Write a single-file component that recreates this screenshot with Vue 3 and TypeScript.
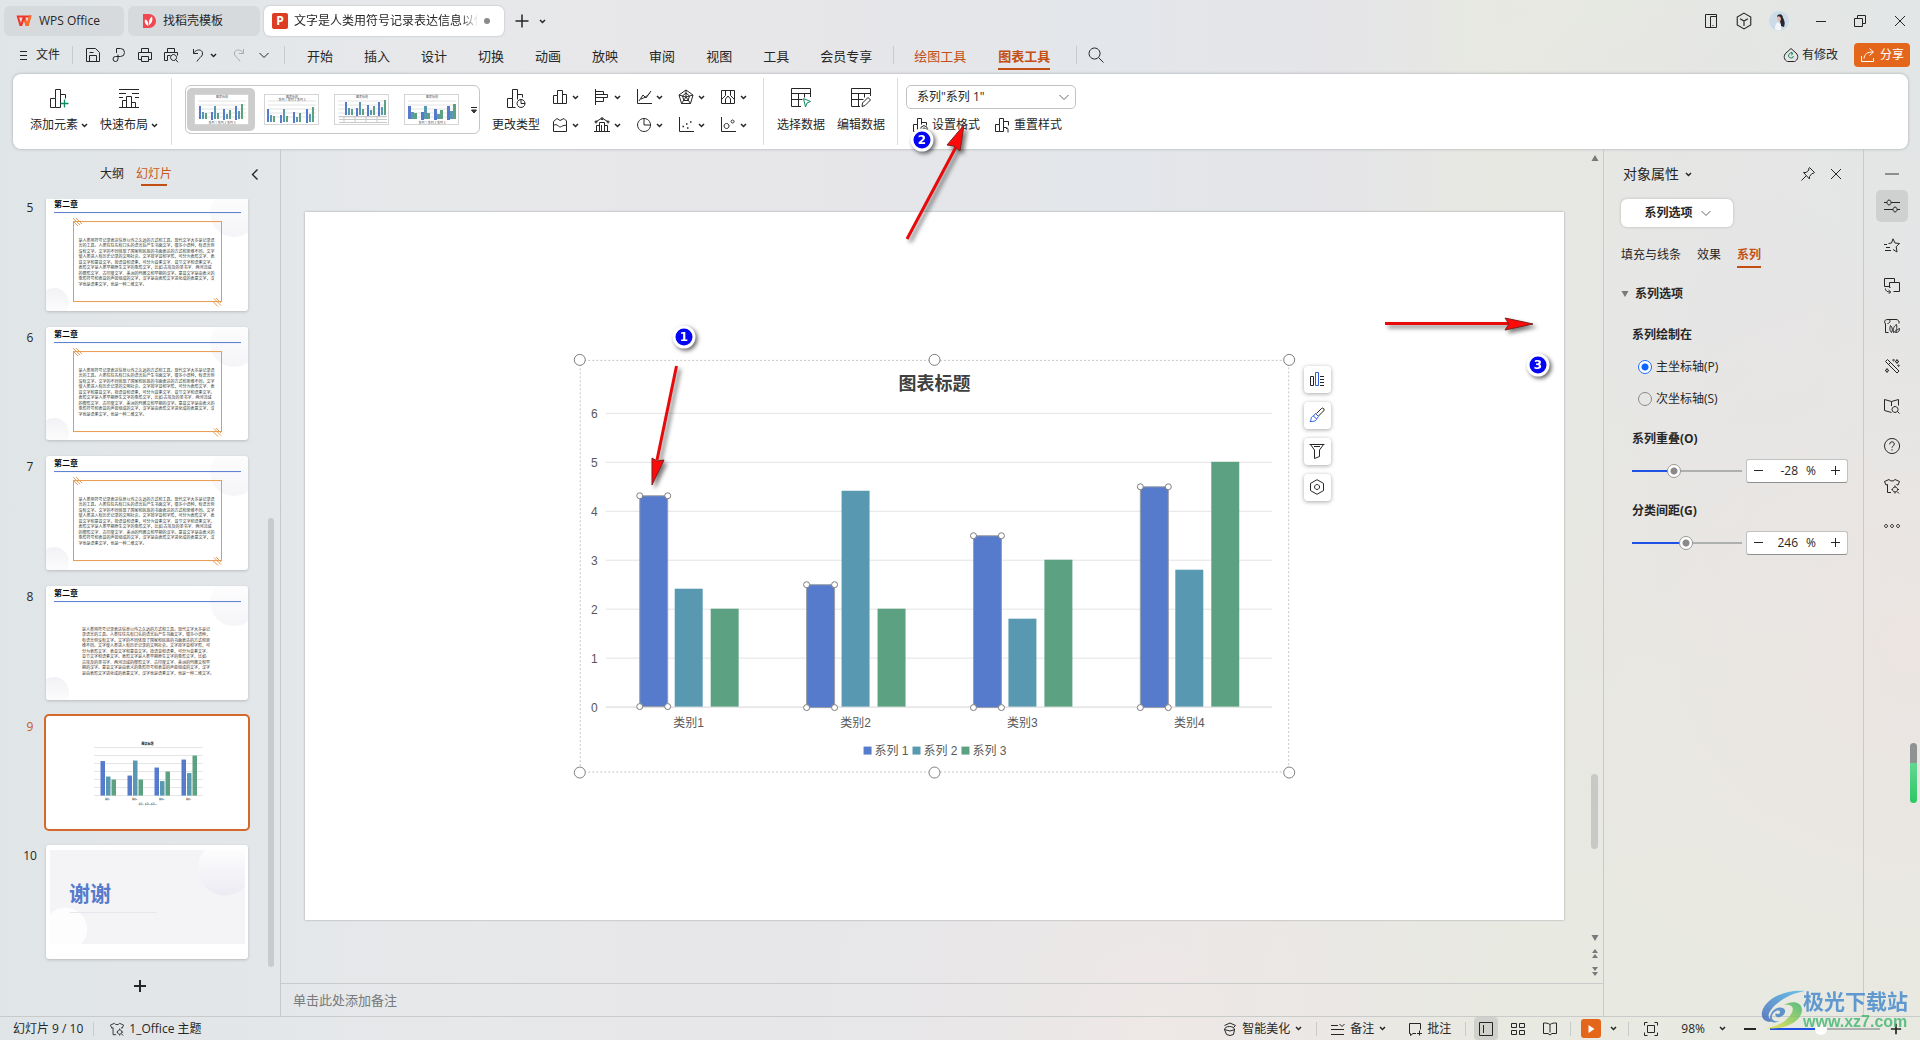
<script setup lang="ts">
import { computed, h, ref } from 'vue'

type Shape = { d: string; stroke?: string; fill?: string; w?: number }
type Glyph = { box: number; shapes: Shape[] }

const g = (box: number, ...items: (string | Shape)[]): Glyph => ({
  box,
  shapes: items.map((i) => (typeof i === 'string' ? { d: i } : i)),
})

const GREEN = '#0f8a63'
const BLUE = '#2b5be0'

const glyphs: Record<string, Glyph> = {
  wps: g(16,
    { d: 'M0.5 2.5h15L12.4 13H9.8L8 7.6 6.2 13H3.6z', fill: '#f0352b', stroke: 'none' },
    { d: 'M3 4.4l2 5.6 1.6-5.6zM13 4.4l-2 5.6-1.6-5.6z', fill: '#dadde0', stroke: 'none' },
    { d: 'M8 7.6L9.8 13h2.6l3.1-10.5h-2.4l-2 7-1.2-3.4z', fill: '#ff6a26', stroke: 'none' }),
  docer: g(16,
    { d: 'M2 1h6a7 7 0 0 1 0 14H2z', fill: '#f0484e', stroke: 'none' },
    { d: 'M7.5 13C3.5 11.5 3.5 8 4 6.500c2 .5 3.500 2 3.500 6.500zM8 12c-.5-4 .5-7 3-8.500 1 3.500 0 7-3 8.500z', fill: '#fff', stroke: 'none' }),
  plus: g(14, { d: 'M7 1v12M1 7h12', w: 2 }),
  plusThin: g(14, { d: 'M7 0.5v13M0.500 7h13', w: 1.5 }),
  plusSmall: g(10, 'M4.500 0v9M0 4.500h9'),
  minusSmall: g(10, 'M0 4.500h9'),
  minus: g(12, { d: 'M0 6h12', w: 2 }),
  chev: g(7, { d: 'M1 2l2.500 2.500L6 2', w: 1.5 }),
  chevWide: g(12, 'M1.500 4L6 8.500 10.500 4'),
  chevLeft: g(12, { d: 'M8.500 1.500L3.500 6.500l5 5', w: 1.4 }),
  menu: g(10, 'M1 1.500h7M1 5.500h7M1 9.500h7'),
  save: g(16, 'M1.500 1.500h9l4 4v9h-13zM4.500 14.500v-6h7v6M4.500 5.500h4'),
  exporter: g(16, 'M5.500 6V1.500h4a4 4 0 0 1 0 8h-5a2.500 2.500 0 1 0 2.500 2.500V7.500'),
  print: g(16, 'M4.500 5.500v-4h7v4M4.500 12.500h-3v-7h13v7h-3M4.500 9.500h7v5h-7z'),
  preview: g(16, 'M4.500 5.500v-4h7v4M4.500 13.500h-3v-8h13v3M4.500 13.500v-5h3', 'M10.500 7.500a3 3 0 1 0 .1 0zM12.800 12.800l2.200 2.500'),
  undo: g(16, 'M3.500 2v4.500h4.500', 'M3.500 6.500C6 1.500 13 2 12.500 7c-.3 3-4 4-5.500 7.500'),
  redo: g(16, 'M12.500 2v4.500H8', 'M12.500 6.500C10 1.500 3 2 3.500 7c.3 3 4 4 5.500 7.500'),
  search: g(16, 'M6.500 1a5.500 5.500 0 1 0 .1 0zM10.500 10.500l5 5'),
  sidebar: g(16, 'M2.500 1.500h11v13h-11zM7.500 14.500v-11h6M9.500 12.500h1'),
  cube: g(16, 'M8 1l6 3.500v7L8 15l-6-3.500v-7zM4.500 6L8 8l3.500-2M8 8v4.500'),
  restore: g(14, 'M1.500 4.500h8v8h-8zM4.500 4.500v-3h8v8h-3'),
  minimize: g(12, 'M1 6.500h10'),
  close: g(14, 'M2 2l10 10M12 2L2 12'),
  cloud: g(16, 'M8 1.500L13 6a5 5 0 0 1-1.500 8.500h-7A5 5 0 0 1 3 6z', { d: 'M9.500 6.500A2.500 2.500 0 1 0 10.500 9M8 5l2 1.500L8.200 8.200', stroke: GREEN }),
  share: g(16, 'M1.500 9v5.500h12V11M4 11.500C4.500 7 7 5 13 5M9.500 1.500L13.500 5l-4 3.500'),
  addEl: g(20, 'M1.500 19.500v-9h5v9zM6.500 10.500v-9h5v18H6.500M11.500 6.500h5v4', { d: 'M15.500 11.500v8M11.500 15.500h8', stroke: GREEN, w: 1.3 }),
  layout: g(20, 'M0 1.500h20M0 5.500h7M13 5.500h7M0 19.500h20M3.500 19.500v-7h4M7.500 19.500v-11h5v11M12.500 14.500h4v5M0 9.500h4M16 9.500h4'),
  changeType: g(20, 'M1.500 19.500v-9h5v9zM6.500 10.500v-9h5v10M6.500 19.500h3M11.500 6.500h5v3', 'M15 11.500a4 4 0 1 0 .1 0zM15 11.500v4h4'),
  column: g(16, 'M1.500 14.500v-8h4v8zM5.500 6.500v-5h5v13M10.500 5.500h4v9h-9'),
  bar: g(16, 'M1.500 0v16M1.500 2.500h8v3h-8M1.500 8.500h12v-3h-12M1.500 8.500h8v4h-8'),
  line: g(16, 'M1.500 0v14.500H16M3 12l4-6 3 3 5-7M5 10c3-1 5-2 9-6'),
  radar: g(16, 'M8 1l7 5-2.500 8.500h-9L1 6zM8 1v7M15 6l-7 2M12.500 14.500L8 8M3.500 14.500L8 8M1 6l7 2M8 4l3.500 3-1.500 4.500H6L4.500 7z'),
  map: g(16, 'M1.500 1.500h13v13h-13zM5.500 1.500v5l-4 4M10.500 1.500v5l4 4M5.500 14v-4l2.500-3 2.500 3v4'),
  area: g(16, 'M1.500 14.500v-10L5 1.500l3 2 4-2 2.500 2.500v10.500zM1.500 8.500c4-3 5 3 8 1 2-1 3-1.500 5-1'),
  combo: g(16, 'M0 14.500h16M2.500 14.500v-6h3v6M5.500 14.500v-9h5v9M10.500 8.500h3v6M7.500 8v6M1.500 5l5-3 3 0 5 3', 'M2 4a1 1 0 1 0 .1 0zM8 .7a1 1 0 1 0 .1 0zM14 4a1 1 0 1 0 .1 0z'),
  pie: g(16, 'M8 1.500a6.500 6.500 0 1 0 .1 0zM8 1.500V8h6.500'),
  scatter: g(16, 'M1.500 0v14.500H16', { d: 'M4.500 9.500h1.500M8 7h1.500M9 11h1.500M12 5h1.500', w: 1.6 }),
  bubble: g(16, 'M1.500 0v14.500H16M6.500 6.500a2.500 2.500 0 1 0 .1 0zM12.500 3a1.500 1.500 0 1 0 .1 0z'),
  pickData: g(20, 'M10 18.500H.5V.5h19V9M.5 5.500h19M.5 11.500h11M7.500 5.500v13M13.500 5.500v4', { d: 'M12.500 10.500l7 3-3.500 1.500-1.500 4z', stroke: GREEN }),
  editData: g(20, 'M9 18.500H.5V.5h19V8M.5 5.500h19M.5 11.500h12M7.500 5.500v13M13.500 5.500v4', 'M11.500 15l5.500-5.500 2.500 2.500-5.500 5.500-3 1z'),
  fmt: g(16, 'M1.500 14.500v-7h4v7zM5.500 7.500v-6h4v6M9.500 5.500h5v3', 'M12 8.500l3 1.800v3.400L12 15.500l-3-1.800v-3.400zM12 11a1 1 0 1 0 .1 0z'),
  reset: g(16, 'M1.500 14.500v-7h4v7zM5.500 7.500v-6h4v13h-4M9.500 4.500h5v4', 'M9 12l2-2 2 2M11 10.500h1.500a2 2 0 0 1 1.500 2v3'),
  pin: g(16, 'M9.500 1.500l5 5-1.500 1-1 0-2.500 3v2.500L3.500 6.500H6L9 4l-.5-1zM6 10l-4.500 4.500'),
  tune: g(16, 'M0 4.500h3M7 4.500h9M0 11.500h9M13 11.500h3', 'M5 2a2 2.500 0 1 0 .1 0zM11 9a2 2.500 0 1 0 .1 0z'),
  star: g(16, 'M4.500 5.500L7.500 5 9 .8l2 4.200 4.500.5-3.300 3.200.8 5.300-4-2.500M0 6.500h3M2 9.500h4M1 12.500h6'),
  shapes: g(16, 'M5.500 8.500h-5v-8h10v4M5.500 4.500h10v9h-6M5.500 4.500v5h1M1.500 10.500c0 2 1 3.500 5 3.500M4.500 12l2.200 2-2.200 2'),
  assist: g(16, 'M4.500 14.500h-3V6C-.5 3 1 1.500 4 1.500h8c2.500 0 3.500 2 3 4M4.500 1.500c3 1 1 4-1 4', 'M7.500 14.500C5 12 6 9 6.500 7.500c2 2 2.500 5 1 7zM9.500 14.500c-1-4 1-7 3-8 1 4-.5 7-3 8zM11.500 14.500c1-2.500 2.500-3.500 4-4 0 2.500-1 4-4 4z'),
  wand: g(16, 'M1.500 3.500l2-2 11.500 11.500-2 2zM4.500 6.500l2-2', 'M13 1.500l.6 1.400 1.400.6-1.400.6L13 5.500l-.6-1.400L11 3.500l1.400-.6zM3 10.500l.6 1.400 1.400.6-1.400.6-.6 1.400-.6-1.400L1 12.500l1.400-.6zM9.500 1.500a.7.7 0 1 0 .1 0zM14.500 7a.7.7 0 1 0 .1 0z'),
  bookSearch: g(16, 'M7.500 14.500L.5 12.500v-11l7 2 7-2v6M7.500 3.500V8', 'M11 8.500a3 3 0 1 0 .1 0zM13.200 13.200l2.300 2.300'),
  help: g(16, 'M8 .5a7.500 7.500 0 1 0 .1 0zM5.700 6.300C5.700 3 10.300 3 10.300 6c0 2-2.300 2-2.300 3.700M8 11.200v1.300'),
  shirt: g(16, 'M5 1.500c1 2 5 2 6 0l4.500 2-1.500 3.500-1.500-.5M7 14.500H3.500v-8L2 7 .5 3.500l4.500-2', 'M11 9a2.500 2.500 0 1 0 .1 0zM11 7.500v1.500M11 14v1.500M7.500 11.500h1M13.500 11.500h1.500M13 13.500l2 2'),
  more: g(16, 'M2 6.500a1.500 1.500 0 1 0 .1 0zM8 6.500a1.500 1.500 0 1 0 .1 0zM14 6.500a1.500 1.500 0 1 0 .1 0z'),
  railMin: g(14, { d: 'M0 7h14', w: 2, stroke: '#8d9092' }),
  cBars: g(16, 'M1.500 5.500h3v9h-3zM11 5.500h4M11 8.500h4M11 11.500h4M11 14.500h4', { d: 'M6.500 1.500h3v13h-3z', stroke: BLUE }),
  cBrush: g(16, 'M7.500 6.500l5-5a1.500 1.500 0 0 1 2 2.500l-5 5', { d: 'M1 14.500c2-2 0-4.500 3.500-5.500l2-2.500 3 3-1.500 2c-1 3-4 3-7 3zM4.500 9l3 3', stroke: BLUE }),
  cFilter: g(16, 'M.5 1.500h15M1.500 1.500l4 5.500v8.500l5-2V7l4-5.500M5 3.500h6'),
  cHex: g(16, 'M8 .7l6.500 3.700v7.200L8 15.300l-6.500-3.700V4.400zM8 5.500a2.500 2.500 0 1 0 .1 0z'),
  beauty: g(14, 'M1.500 7.500a5 3 0 0 1 10 0l-1 5-3.500 1-3.500-1zM1.500 3.500l5.500-2.500 5.500 2.500-2 2M1.500 7.500L7 9l5-1.500'),
  note: g(14, 'M0 3.500h7M0 7.500h13M0 12.500h13M8.500 2l2.500 2.500L13.500 2'),
  comment: g(14, 'M8 11.500H5l-2.500 2v-2h-1v-10h11v6M11.500 8.500v5M9 11.500h5'),
  viewNormal: g(16, 'M1.500 1.500h13v13h-13zM5.500 4v8'),
  viewGrid: g(16, 'M1.500 2.500h5v4h-5zM9.500 2.500h5v4h-5zM1.500 9.500h5v4h-5zM9.500 9.500h5v4h-5z'),
  viewRead: g(16, 'M8 3.500c-2-1.500-4-1.500-6.500-1.500v10.500H6l2 1.500 2-1.500h4.500V2C12 2 10 2 8 3.500zM8 3.500v8'),
  play: g(10, { d: 'M2.500 1l6 4-6 4z', fill: '#fff', stroke: 'none' }),
  fit: g(16, 'M1.500 4.500v-3h3M11.500 1.500h3v3M14.500 11.500v3h-3M4.500 14.500h-3v-3M4.500 4.500h7v7h-7z'),
  triUp: g(8, { d: 'M4 1l3.500 6h-7z', fill: '#77797a', stroke: 'none' }),
  triDown: g(8, { d: 'M4 7L.5 1h7z', fill: '#77797a', stroke: 'none' }),
  dblUp: g(10, { d: 'M5 0l3 4H2zM5 5l3 4H2z', fill: '#77797a', stroke: 'none' }),
  dblDown: g(10, { d: 'M5 5L2 1h6zM5 10L2 6h6z', fill: '#77797a', stroke: 'none' }),
  galleryMore: g(8, 'M1 1.500h6', { d: 'M1.500 4h5L4 7z', fill: '#333', stroke: '#333' }),
}

const Icon = (props: { name: string; size?: number | string }) => {
  const glyph = glyphs[props.name]
  const size = props.size ?? glyph.box
  return h(
    'svg',
    { width: size, height: size, viewBox: `0 0 ${glyph.box} ${glyph.box}`, class: 'icon', 'aria-hidden': 'true' },
    glyph.shapes.map((s) =>
      h('path', { d: s.d, fill: s.fill ?? 'none', stroke: s.stroke ?? 'currentColor', 'stroke-width': s.w ?? 1 }),
    ),
  )
}
Icon.props = ['name', 'size']

const menus = ['开始', '插入', '设计', '切换', '动画', '放映', '审阅', '视图', '工具', '会员专享']
const quickCharts = [
  ['column', 'bar', 'line', 'radar', 'map'],
  ['area', 'combo', 'pie', 'scatter', 'bubble'],
]
const rail = ['tune', 'star', 'shapes', 'assist', 'wand', 'bookSearch', 'help', 'shirt', 'more']

const series = [
  { name: '系列 1', color: '#567bcc', values: [4.3, 2.5, 3.5, 4.5] },
  { name: '系列 2', color: '#5898b0', values: [2.4, 4.4, 1.8, 2.8] },
  { name: '系列 3', color: '#5ca181', values: [2, 2, 3, 5] },
]

const categories = ['类别1', '类别2', '类别3', '类别4']

function bars(x0: number, groupW: number, first: number, step: number, barW: number, base: number, unit: number) {
  return categories.flatMap((_, c) =>
    series.map((s, i) => ({
      key: `${c}-${i}`,
      series: i,
      color: s.color,
      x: Math.floor(x0 + c * groupW + first + i * step),
      y: Math.round(base - s.values[c] * unit),
      w: barW,
      h: Math.round(s.values[c] * unit),
    })),
  )
}

const mainBars = bars(301, 167, 34, 35.6, 28, 495, 49)
const pageBars = bars(100, 54, 12, 11, 9, 159, 16)
const galleryBars = [
  bars(4, 12, 1, 3, 2, 25, 3),
  bars(3, 13, 0, 3, 2, 28, 3),
  bars(10, 11, 1, 3, 2, 21, 3),
  bars(3, 13, 1, 3, 3, 25, 3),
]

const bodyText = [
  '是人类用符号记录表达信息以传之久远的方式和工具。现代文字大多是记录语',
  '言的工具。人类往往先有口头的语言后产生书面文字，很多小语种，有语言但',
  '没有文字。文字的不同体现了国家和民族的书面表达的方式和思维不同。文字',
  '使人类进入有历史记录的文明社会。文字按字音和字形，可分为表形文字、表',
  '音文字和意音文字。按语音和语素，可分为音素文字、音节文字和语素文字。',
  '表形文字是人类早期原生文字的象形文字，比如:古埃及的圣书字、两河流域',
  '的楔形文字、古印度文字、美洲的玛雅文和早期的汉字。意音文字是由表义的',
  '象形符号和表音的声旁组成的文字，汉字是由表形文字进化成的表意文字，汉',
  '字也是语素文字，也是一种二维文字。',
]
const plainText = [
  '是人类用符号记录表达信息以传之久远的方式和工具。现代文字大多是记',
  '录语言的工具。人类往往先有口头的语言后产生书面文字，很多小语种，',
  '有语言但没有文字。文字的不同体现了国家和民族的书面表达的方式和思',
  '维不同。文字使人类进入有历史记录的文明社会。文字按字音和字形，可',
  '分为表形文字、表音文字和意音文字。按语音和语素，可分为音素文字、',
  '音节文字和语素文字。表形文字是人类早期原生文字的象形文字，比如:',
  '古埃及的圣书字、两河流域的楔形文字、古印度文字、美洲的玛雅文和早',
  '期的汉字。意音文字是由表义的象形符号和表音的声旁组成的文字，汉字',
  '是由表形文字进化成的表意文字，汉字也是语素文字，也是一种二维文字。',
]

const pages = [
  { no: 5, kind: 'framed' },
  { no: 6, kind: 'framed' },
  { no: 7, kind: 'framed' },
  { no: 8, kind: 'plain' },
  { no: 9, kind: 'chart' },
  { no: 10, kind: 'thanks' },
]
const current = ref(9)

const axis = ref('primary')
const overlap = ref(-28)
const gapWidth = ref(246)
const zoom = ref(46)
const overlapFill = computed(() => ({ '--fill': `${(overlap.value + 100) / 2}%` }))
const gapFill = computed(() => ({ '--fill': `${gapWidth.value / 5}%` }))
const zoomFill = computed(() => ({ '--fill': `${zoom.value}%` }))
</script>

<template>
  <div class="app">
    <header class="titlebar">
      <button class="doc-tab home"><Icon name="wps" />WPS Office</button>
      <button class="doc-tab store"><Icon name="docer" />找稻壳模板</button>
      <button class="doc-tab active">
        <span class="p-logo">P</span><span class="doc-name">文字是人类用符号记录表达信息以传</span><span class="dirty"></span>
      </button>
      <button class="new-tab" aria-label="新建"><Icon name="plusThin" /></button>
      <button class="new-more" aria-label="更多"><Icon name="chev" /></button>
      <div class="window-tools">
        <button aria-label="侧栏"><Icon name="sidebar" /></button>
        <button aria-label="应用"><Icon name="cube" size="18" /></button>
        <button aria-label="账户">
          <svg width="20" height="20" viewBox="0 0 20 20">
            <circle cx="10" cy="10" r="10" fill="#ccdbe8" />
            <path d="M8 5c2-3 6-2 6 2 2 3 2 6 1 9l-3-1c0-3-1-4-2-6z" fill="#2a2430" />
            <path d="M8 6c2-2 4 0 4 2l-1 3-2-1z" fill="#e7b9a6" />
            <path d="M6 18c0-4 1-6 3-7l3 3 0 5c-2 1-5 0-6-1z" fill="#f2f6fa" />
          </svg>
        </button>
        <button class="win" aria-label="最小化"><Icon name="minimize" /></button>
        <button class="win" aria-label="还原"><Icon name="restore" /></button>
        <button class="win" aria-label="关闭"><Icon name="close" /></button>
      </div>
    </header>

    <nav class="menubar">
      <button class="file"><Icon name="menu" />文件</button>
      <i class="sep"></i>
      <div class="quick">
        <button aria-label="保存"><Icon name="save" /></button>
        <button aria-label="输出"><Icon name="exporter" /></button>
        <button aria-label="打印"><Icon name="print" /></button>
        <button aria-label="打印预览"><Icon name="preview" /></button>
        <button aria-label="撤销" class="undo"><Icon name="undo" /><Icon name="chev" /></button>
        <button aria-label="恢复" class="dim"><Icon name="redo" /></button>
        <button aria-label="自定义"><Icon name="chevWide" /></button>
      </div>
      <i class="sep"></i>
      <div class="menus">
        <button v-for="m in menus" :key="m">{{ m }}</button>
      </div>
      <i class="sep"></i>
      <div class="menus context">
        <button>绘图工具</button>
        <button class="on">图表工具</button>
      </div>
      <i class="sep"></i>
      <button class="find" aria-label="搜索"><Icon name="search" /></button>
      <div class="account">
        <button class="changes"><Icon name="cloud" />有修改</button>
        <button class="share"><Icon name="share" />分享</button>
      </div>
    </nav>

    <section class="ribbon">
      <div class="group first">
        <button class="big"><Icon name="addEl" /><span>添加元素<Icon name="chev" /></span></button>
        <button class="big"><Icon name="layout" /><span>快速布局<Icon name="chev" /></span></button>
      </div>
      <div class="group styles">
        <div class="gallery">
          <button v-for="(set, n) in galleryBars" :key="n" class="style" :class="{ on: n === 0 }" :aria-label="'样式 ' + (n + 1)">
            <svg viewBox="0 0 55 31">
              <rect width="55" height="31" fill="#fff" stroke="#d5d5d5" stroke-width="2" />
              <path v-for="l in 5" :key="l" :d="`M4 ${3 + l * 4}H52`" stroke="#e2e2e2" />
              <text x="28" y="4" class="mini">图表标题</text>
              <rect v-for="b in set" :key="b.key" :x="b.x" :y="b.y" :width="b.w" :height="b.h" :fill="b.color" />
              <g v-if="n === 2">
                <path d="M5 22.500H53M5 25.500H53M5 28.500H53M10 22v7M21 22v7M32 22v7M43 22v7" stroke="#c9c9c9" fill="none" />
              </g>
              <text v-else x="28" :y="n === 1 ? 7 : 30" class="mini">系列 1 系列 2 系列 3</text>
            </svg>
          </button>
          <button class="gallery-more" aria-label="更多样式"><Icon name="galleryMore" /></button>
        </div>
        <button class="big narrow"><Icon name="changeType" /><span>更改类型</span></button>
        <div class="types">
          <div v-for="(row, r) in quickCharts" :key="r" class="type-row">
            <button v-for="t in row" :key="t" :aria-label="t"><Icon :name="t" /><Icon name="chev" /></button>
          </div>
        </div>
      </div>
      <div class="group data">
        <button class="big narrow"><Icon name="pickData" /><span>选择数据</span></button>
        <button class="big narrow"><Icon name="editData" /><span>编辑数据</span></button>
      </div>
      <div class="group format">
        <div class="picker">
          <select aria-label="图表元素"><option>系列"系列 1"</option></select>
          <Icon name="chevWide" />
        </div>
        <div class="format-row">
          <button><Icon name="fmt" />设置格式</button>
          <button><Icon name="reset" />重置样式</button>
        </div>
      </div>
    </section>

    <div class="body">
      <aside class="outline">
        <div class="outline-head">
          <button>大纲</button>
          <button class="on">幻灯片</button>
          <button class="fold" aria-label="收起"><Icon name="chevLeft" /></button>
        </div>
        <div class="scroller">
          <ol class="pages">
            <li v-for="p in pages" :key="p.no" :class="{ current: p.no === current }" @click="current = p.no">
              <span class="no">{{ p.no }}</span>
              <svg class="thumb" viewBox="0 0 404 227">
                <defs>
                  <linearGradient id="orb" x1="0" y1="0" x2="0" y2="1">
                    <stop offset="0" stop-color="#fdfdfe" /><stop offset="1" stop-color="#ebebf2" />
                  </linearGradient>
                  <linearGradient id="orbLow" x1="0" y1="0" x2="0" y2="1">
                    <stop offset="0" stop-color="#f2f2f6" /><stop offset="1" stop-color="#fff" />
                  </linearGradient>
                </defs>
                <template v-if="p.kind === 'framed' || p.kind === 'plain'">
                  <circle cx="376" cy="32" r="48" fill="url(#orb)" opacity="0.5" />
                  <circle cx="16" cy="212" r="30" fill="url(#orbLow)" />
                  <text x="16" y="20" class="t-title">第二章</text>
                  <path d="M16 31H390" stroke="#567bcc" stroke-width="2" />
                </template>
                <template v-if="p.kind === 'framed'">
                  <rect x="55" y="49" width="296" height="160" fill="none" stroke="#e8994c" stroke-width="2" />
                  <path d="M54 42l14 14M60 42l12 12M56 50l8 8M336 203l14 14M334 209l10 10M340 202l10 10" stroke="#e8994c" stroke-width="2" />
                  <text v-for="(t, i) in bodyText" :key="i" x="65" :y="89 + i * 11" class="t-body">{{ t }}</text>
                </template>
                <template v-if="p.kind === 'plain'">
                  <text v-for="(t, i) in plainText" :key="i" x="72" :y="89 + i * 11" class="t-body">{{ t }}</text>
                </template>
                <template v-if="p.kind === 'chart'">
                  <text x="203" y="58" class="t-chart">图表标题</text>
                  <path v-for="l in 7" :key="l" :d="`M96 ${47 + l * 16}H313`" stroke="#e4e4e4" stroke-width="2" />
                  <rect v-for="b in pageBars" :key="b.key" :x="b.x - 3" :y="b.y" :width="b.w" :height="b.h" :fill="b.color" />
                  <text v-for="(c, i) in categories" :key="c" :x="123 + i * 54" y="167" class="t-label">{{ c }}</text>
                  <text x="203" y="177" class="t-label">系列 1 系列 2 系列 3</text>
                </template>
                <template v-if="p.kind === 'thanks'">
                  <rect x="8" y="10" width="390" height="188" fill="#f4f4f7" />
                  <path d="M318 10a52 52 0 0 0 80 73V10z" fill="url(#orb)" />
                  <path d="M8 138a40 40 0 0 1 62 60H8z" fill="#fdfdfe" />
                  <path d="M48 135H222" stroke="#e6e7ec" stroke-width="2" />
                  <text x="46" y="112" class="t-thanks">谢谢</text>
                </template>
              </svg>
            </li>
          </ol>
          <button class="add-page" aria-label="新建幻灯片"><Icon name="plus" /></button>
          <span class="scroll-thumb"></span>
        </div>
      </aside>

      <main class="work">
        <div class="stage">
          <div class="slide">
            <svg class="chart" viewBox="0 0 1260 708">
              <text x="630" y="178" class="c-title">图表标题</text>
              <g v-for="v in 7" :key="v">
                <path :d="`M301 ${544.5 - v * 49}H968`" :stroke="v === 1 ? '#d4d4d4' : '#e3e3e3'" />
                <text x="293" :y="549 - v * 49" class="c-axis">{{ v - 1 }}</text>
              </g>
              <g v-for="b in mainBars" :key="b.key">
                <rect :x="b.x" :y="b.y" :width="b.w" :height="b.h" :fill="b.color" :stroke="b.series ? 'none' : '#9a9ea6'" />
                <template v-if="b.series === 0">
                  <circle v-for="k in 4" :key="k" :cx="b.x + (k % 2) * b.w" :cy="k > 2 ? b.y + b.h : b.y" r="3" class="knob" />
                </template>
              </g>
              <text v-for="(c, i) in categories" :key="c" :x="384 + i * 167" y="515" class="c-label">{{ c }}</text>
              <g v-for="(s, i) in series" :key="s.name">
                <rect :x="559 + i * 49" y="535" width="8" height="8" :fill="s.color" />
                <text :x="570 + i * 49" y="543" class="c-legend">{{ s.name }}</text>
              </g>
              <rect x="275.500" y="148.500" width="709" height="412" class="marquee" />
              <g v-for="x in [275, 630, 985]" :key="x">
                <circle :cx="x" cy="148" r="5.500" class="handle" />
                <circle :cx="x" cy="561" r="5.500" class="handle" />
              </g>
            </svg>
            <div class="chart-tools">
              <button v-for="n in ['cBars', 'cBrush', 'cFilter', 'cHex']" :key="n" :aria-label="n"><Icon :name="n" /></button>
            </div>
          </div>
          <div class="v-scroll">
            <Icon name="triUp" />
            <span class="v-thumb"></span>
            <Icon name="triDown" />
            <Icon name="dblUp" />
            <Icon name="dblDown" />
          </div>
        </div>
        <div class="notes">单击此处添加备注</div>
      </main>

      <aside class="props">
        <div class="props-head">
          <h2>对象属性<Icon name="chev" /></h2>
          <button aria-label="固定"><Icon name="pin" /></button>
          <button aria-label="关闭"><Icon name="close" /></button>
        </div>
        <button class="scope">系列选项<Icon name="chevWide" /></button>
        <div class="tabs">
          <button>填充与线条</button>
          <button>效果</button>
          <button class="on">系列</button>
        </div>
        <h3><Icon name="triDown" />系列选项</h3>
        <fieldset>
          <legend>系列绘制在</legend>
          <label><input v-model="axis" type="radio" name="axis" value="primary" />主坐标轴(P)</label>
          <label><input v-model="axis" type="radio" name="axis" value="secondary" />次坐标轴(S)</label>
        </fieldset>
        <div class="field">
          <label for="overlap">系列重叠(O)</label>
          <div class="field-row">
            <input id="overlap" v-model.number="overlap" type="range" min="-100" max="100" :style="overlapFill" />
            <div class="spin">
              <button aria-label="减少" @click="overlap--"><Icon name="minusSmall" /></button>
              <input v-model.number="overlap" type="text" aria-label="系列重叠数值" /><span>%</span>
              <button aria-label="增加" @click="overlap++"><Icon name="plusSmall" /></button>
            </div>
          </div>
        </div>
        <div class="field">
          <label for="gap">分类间距(G)</label>
          <div class="field-row">
            <input id="gap" v-model.number="gapWidth" type="range" min="0" max="500" :style="gapFill" />
            <div class="spin">
              <button aria-label="减少" @click="gapWidth--"><Icon name="minusSmall" /></button>
              <input v-model.number="gapWidth" type="text" aria-label="分类间距数值" /><span>%</span>
              <button aria-label="增加" @click="gapWidth++"><Icon name="plusSmall" /></button>
            </div>
          </div>
        </div>
      </aside>

      <aside class="rail">
        <button class="rail-min" aria-label="收起"><Icon name="railMin" /></button>
        <button v-for="(r, i) in rail" :key="r" :class="{ on: i === 0 }" :aria-label="r"><Icon :name="r" /></button>
        <span class="meter"></span>
      </aside>
    </div>

    <footer class="status">
      <span>幻灯片 9 / 10</span>
      <i class="sep"></i>
      <button class="theme"><Icon name="shirt" size="14" />1_Office 主题</button>
      <div class="status-right">
        <button><Icon name="beauty" />智能美化<Icon name="chev" /></button>
        <i class="sep"></i>
        <div class="pair">
          <button><Icon name="note" />备注<Icon name="chev" /></button>
          <button><Icon name="comment" />批注</button>
        </div>
        <i class="sep"></i>
        <div class="views">
          <button class="on" aria-label="普通视图"><Icon name="viewNormal" /></button>
          <button aria-label="浏览"><Icon name="viewGrid" /></button>
          <button aria-label="阅读"><Icon name="viewRead" /></button>
        </div>
        <i class="sep"></i>
        <div class="show">
          <button class="play" aria-label="放映"><Icon name="play" /></button>
          <button aria-label="放映选项"><Icon name="chev" /></button>
        </div>
        <i class="sep"></i>
        <div class="zoom">
          <button aria-label="适应窗口"><Icon name="fit" /></button>
          <button class="percent">98%<Icon name="chev" /></button>
          <button aria-label="缩小"><Icon name="minus" /></button>
          <input v-model.number="zoom" type="range" min="0" max="100" aria-label="缩放" :style="zoomFill" />
          <button aria-label="放大"><Icon name="plus" size="12" /></button>
        </div>
      </div>
    </footer>

    <svg class="marks" width="100%" height="100%">
      <g class="arrows">
        <path d="M676.500 366L657 460" />
        <path class="head" d="M652 485l0-27 5 3 7-1z" />
        <path d="M907 239l49-92" />
        <path class="head" d="M964 125l-17 20 7 1 6 5z" />
        <path d="M1385 323.500h126" />
        <path class="head" d="M1533 324l-28-6 4 6-4 6z" />
      </g>
      <g class="badges">
        <g><circle cx="684" cy="337" r="10" /><text x="684" y="341">1</text></g>
        <g><circle cx="922" cy="140" r="10" /><text x="922" y="144">2</text></g>
        <g><circle cx="1538" cy="365" r="10" /><text x="1538" y="369">3</text></g>
      </g>
    </svg>

    <div class="watermark">
      <svg width="44" height="40" viewBox="0 0 44 40">
        <defs>
          <linearGradient id="wmBlue" x1="0" y1="1" x2="1" y2="0">
            <stop offset="0" stop-color="#3f62b8" /><stop offset="1" stop-color="#49b9ea" />
          </linearGradient>
          <linearGradient id="wmGreen" x1="0" y1="1" x2="1" y2="0">
            <stop offset="0" stop-color="#f2e33c" /><stop offset="1" stop-color="#35b36a" />
          </linearGradient>
        </defs>
        <path d="M44 1C24-1 4 9 1 22c-2 9 8 12 12 8-6 0-7-5-3-10C15 12 30 3 44 1z" fill="url(#wmBlue)" />
        <path d="M5 38c18 3 36-7 36-18 0-8-10-10-18-5 8-1 11 3 7 9-4 7-14 13-25 14z" fill="url(#wmGreen)" />
        <path d="M9 27c1-7 8-11 13-9 4 2 2 8-3 9-3 1-6-1-4-4 1 2 4 1 4-1 0-3-7-1-8 4-1 4 3 6 7 5-5 3-10 1-9-4z" fill="#3f7fc4" />
      </svg>
      <p><b>极光下载站</b><span>www.xz7.com</span></p>
    </div>
  </div>
</template>

<style>
body {
  margin: 0;
}
</style>

<style scoped>
.app {
  position: relative;
  display: flex;
  flex-direction: column;
  min-height: 100vh;
  overflow: hidden;
  color: #262626;
  font: 12px/16px 'Open Sans', 'Noto Sans CJK SC', sans-serif;
  background:
    radial-gradient(ellipse 420px 380px at 100% 62%, #ece5e2 0%, transparent 100%),
    radial-gradient(ellipse 360px 460px at 60% 100%, #eee8e6 0%, transparent 100%),
    radial-gradient(ellipse 620px 480px at 90% 100%, #e8e9e1 40%, transparent 100%),
    radial-gradient(ellipse 400px 400px at 92% 30%, #e6e5e6 0%, transparent 100%),
    linear-gradient(90deg, #e0e5e8 0%, #e7e8ea 25%, #e7e6e9 40%, #e3e6ea 58%, #e5e5e8 70%, #e7e9e1 78%, #e6e8e2 86%, #e1e6e6 100%);
}

button,
input,
select {
  margin: 0;
  padding: 0;
  border: 0;
  background: none;
  color: inherit;
  font: inherit;
}

button {
  display: flex;
  align-items: center;
  justify-content: center;
  white-space: nowrap;
}

.icon {
  flex: none;
}

.sep {
  width: 1px;
  height: 18px;
  flex: none;
  background: #c8cacc;
}

.titlebar {
  display: flex;
  align-items: center;
  gap: 4px;
  height: 40px;
  padding: 2px 13px 0 4px;
  box-sizing: border-box;
}

.doc-tab {
  height: 30px;
  justify-content: flex-start;
  border-radius: 6px;
  background: #d7dadc;
}

.home {
  width: 120px;
  padding-left: 12px;
  gap: 7px;
}

.store {
  width: 132px;
  padding-left: 13px;
  gap: 6px;
}

.doc-tab.active {
  width: 240px;
  padding-left: 8px;
  gap: 6px;
  background: #fff;
  box-shadow: 0 0 2px #aaa;
}

.p-logo {
  width: 16px;
  border-radius: 2px;
  background: #dd3d22;
  color: #fff;
  font-weight: 700;
}

.doc-name {
  width: 194px;
  margin-right: -10px;
  text-align: left;
  mask-image: linear-gradient(90deg, #000 86%, transparent 95%);
}

.dirty {
  width: 6px;
  height: 6px;
  border-radius: 3px;
  background: #8a8a8a;
}

.new-tab {
  margin-left: 7px;
}

.new-more {
  margin-left: 6px;
}

.window-tools {
  display: flex;
  align-items: center;
  gap: 16px;
  margin-left: auto;
}

.win {
  margin-left: 10px;
}

.menubar {
  display: flex;
  align-items: center;
  height: 34px;
  padding: 0 10px 4px 19px;
  box-sizing: border-box;
}

.file {
  gap: 7px;
  margin-right: 12px;
}

.quick {
  display: flex;
  align-items: center;
  gap: 10px;
  padding: 0 14px 0 12px;
}

.undo {
  gap: 4px;
  padding-left: 1px;
}

.dim {
  margin: 0 1px 0 4px;
  color: #a9acae;
}

.menus {
  display: flex;
  gap: 31px;
  padding: 2px 21px 0 22px;
  font-size: 13px;
}

.menus button {
  height: 28px;
}

.context {
  gap: 32px;
  padding: 2px 26px 0 20px;
  color: #c34f14;
}

.menus .on {
  font-weight: 700;
  box-shadow: inset 0 -2px #c34f14;
}

.find {
  margin-left: 11px;
}

.account {
  display: flex;
  align-items: center;
  gap: 16px;
  margin-left: auto;
}

.changes {
  gap: 3px;
}

.share {
  width: 56px;
  height: 24px;
  gap: 4px;
  border-radius: 4px;
  background: #e3661a;
  color: #fff;
}

.ribbon {
  display: flex;
  align-items: stretch;
  height: 75px;
  margin: 0 12px 0 13px;
  padding: 4px 0;
  box-sizing: border-box;
  border-radius: 8px;
  background: #fff;
  box-shadow: 0 0 3px #a0a4a6;
}

.group {
  display: flex;
  align-items: flex-start;
  border-right: 1px solid #dcdcdc;
}

.group:last-child {
  border-right: 0;
}

.first {
  gap: 12px;
  padding: 10px 13px 0 17px;
}

.big {
  flex-direction: column;
  gap: 9px;
}

.big span {
  display: flex;
  align-items: center;
  gap: 3px;
}

.styles {
  padding: 0 16px 0 13px;
}

.gallery {
  display: flex;
  align-items: center;
  width: 295px;
  height: 49px;
  margin-top: 7px;
  padding: 0 1px;
  box-sizing: border-box;
  border: 1px solid #c4c6c8;
  border-radius: 6px;
}

.style {
  width: 68px;
  height: 43px;
  margin-right: 2px;
  border-radius: 5px;
}

.style svg {
  width: 55px;
  height: 31px;
}

.style.on {
  background: #cdcdcd;
}

.gallery-more {
  margin-left: 3px;
}

.mini {
  font-size: 3px;
  text-anchor: middle;
  fill: #555;
}

.narrow {
  margin-top: 10px;
}

.styles .narrow {
  margin-left: 12px;
}

.types {
  display: flex;
  flex-direction: column;
  gap: 12px;
  margin: 11px 0 0 12px;
}

.type-row {
  display: flex;
  gap: 15px;
}

.type-row button {
  width: 27px;
  justify-content: space-between;
}

.data {
  gap: 12px;
  padding: 0 12px 0 13px;
}

.format {
  flex-direction: column;
  gap: 8px;
  padding: 7px 0 0 8px;
}

.picker {
  position: relative;
  width: 170px;
}

.picker select {
  appearance: none;
  width: 100%;
  height: 24px;
  padding-left: 10px;
  box-sizing: border-box;
  border: 1px solid #c0c2c4;
  border-radius: 5px;
  background: #fff;
}

.picker .icon {
  position: absolute;
  right: 6px;
  top: 6px;
  color: #666;
  pointer-events: none;
}

.format-row {
  display: flex;
  gap: 14px;
  padding-left: 6px;
}

.format-row button {
  gap: 4px;
}

.body {
  display: flex;
  flex: 1;
}

.outline {
  display: flex;
  flex-direction: column;
  width: 280px;
  flex: none;
  border-right: 1px solid #c6c9cb;
}

.outline-head {
  display: flex;
  align-items: center;
  height: 50px;
  padding: 0 19px 0 100px;
  gap: 12px;
}

.outline-head button {
  position: relative;
  height: 24px;
}

.outline-head .on {
  color: #c9571a;
}

.outline-head .on::after {
  content: '';
  position: absolute;
  left: 5px;
  right: 5px;
  bottom: 0;
  height: 2px;
  background: #c34f14;
}

.outline-head .fold {
  margin-left: auto;
}

.scroller {
  position: relative;
  flex: 1;
  overflow: hidden;
}

.pages {
  display: flex;
  flex-direction: column;
  gap: 16px;
  margin: -2px 0 0;
  padding: 0 32px 0 0;
  list-style: none;
}

.pages li {
  display: flex;
}

.no {
  width: 46px;
  padding: 3px 0 0 14px;
  box-sizing: border-box;
  text-align: center;
}

.thumb {
  flex: 1;
  min-width: 0;
  aspect-ratio: 16 / 9;
  border-radius: 3px;
  background: #fff;
  box-shadow: 0 1px 3px #b8bbbe;
}

.current .no {
  color: #c9571a;
}

.current .thumb {
  outline: 2px solid #d4692c;
  box-shadow: none;
}

.t-title {
  font-size: 16px;
  font-weight: 700;
}

.t-body {
  font-size: 8px;
  fill: #333;
}

.t-chart {
  font-size: 6px;
  font-weight: 700;
  text-anchor: middle;
}

.t-label {
  font-size: 4px;
  text-anchor: middle;
}

.t-thanks {
  font-size: 42px;
  font-weight: 700;
  fill: #567bcc;
}

.add-page {
  width: 280px;
  height: 54px;
}

.scroll-thumb {
  position: absolute;
  right: 6px;
  top: 39%;
  width: 6px;
  height: 55%;
  border-radius: 3px;
  background: #c8cbcd;
}

.work {
  display: flex;
  flex-direction: column;
  flex: 1;
  min-width: 0;
}

.stage {
  display: flex;
  flex: 1;
  align-items: center;
  padding-left: 24px;
}

.slide {
  position: relative;
  flex: 1;
  aspect-ratio: 16 / 9;
  background: #fff;
  box-shadow: 0 0 2px #999d9f;
}

.chart {
  display: block;
  width: 100%;
}

.c-title {
  font-size: 18px;
  font-weight: 700;
  text-anchor: middle;
  fill: #404040;
}

.c-axis,
.c-label,
.c-legend {
  font-family: 'Liberation Sans', 'Noto Sans CJK SC', sans-serif;
  font-size: 12px;
  fill: #595959;
}

.c-axis {
  text-anchor: end;
}

.c-label {
  text-anchor: middle;
}

.knob,
.handle {
  fill: #fff;
  stroke: #7c7c7c;
}

.marquee {
  fill: none;
  stroke: #c6c6c6;
  stroke-dasharray: 2 2;
}

.chart-tools {
  position: absolute;
  left: 79%;
  top: 22%;
  display: flex;
  flex-direction: column;
  gap: 9px;
  margin: -2px 0 0 4px;
}

.chart-tools button {
  width: 27px;
  height: 27px;
  border-radius: 4px;
  background: #fff;
  box-shadow: 0 1px 4px #a8a8a8;
}

.v-scroll {
  display: flex;
  flex-direction: column;
  align-items: center;
  align-self: stretch;
  gap: 7px;
  width: 17px;
  margin-left: 22px;
  padding: 5px 0 7px;
  box-sizing: border-box;
}

.v-thumb {
  width: 7px;
  height: 75px;
  margin: auto 0 78px;
  border-radius: 4px;
  background: #c7c9c7;
}

.notes {
  height: 32px;
  padding-left: 12px;
  border-top: 1px solid #c9cbca;
  color: #77797b;
  font-size: 13px;
  line-height: 32px;
}

.props {
  width: 261px;
  flex: none;
  box-sizing: border-box;
  padding: 13px 15px 0 17px;
  border-left: 1px solid #c9cbca;
  border-right: 1px solid #c9cbca;
}

.props-head {
  display: flex;
  align-items: center;
  gap: 13px;
  height: 24px;
  padding-right: 5px;
}

.props-head h2 {
  display: flex;
  align-items: center;
  gap: 6px;
  flex: 1;
  margin: 0;
  padding-left: 2px;
  font-size: 14px;
  font-weight: 400;
}

.scope {
  width: 112px;
  height: 28px;
  gap: 7px;
  margin-top: 13px;
  padding-left: 2px;
  border-radius: 6px;
  background: #fff;
  box-shadow: 0 0 3px #b5b5b5;
  font-weight: 700;
}

.scope .icon {
  color: #666;
}

.tabs {
  display: flex;
  gap: 16px;
  margin-top: 15px;
}

.tabs button {
  height: 26px;
}

.tabs .on {
  color: #c34f14;
  font-weight: 700;
  box-shadow: inset 0 -2px #c34f14;
}

h3 {
  display: flex;
  align-items: center;
  gap: 6px;
  margin: 18px 0 0;
  font-size: 12px;
}

fieldset {
  margin: 25px 0 24px;
  padding: 0 0 0 11px;
  border: 0;
}

legend {
  padding: 0;
  font-weight: 700;
}

fieldset label {
  display: flex;
  align-items: center;
  gap: 4px;
  height: 16px;
  margin: 16px 0 0 6px;
}

input[type='radio'] {
  appearance: none;
  width: 14px;
  height: 14px;
  border: 1px solid #8a8a8a;
  border-radius: 50%;
}

input[type='radio']:checked {
  border-color: #1a6dff;
  background: radial-gradient(circle, #0a66ff 3px, #fff 4px);
}

.field {
  margin: 0 0 20px 11px;
}

.field > label {
  font-weight: 700;
}

.field-row {
  display: flex;
  align-items: center;
  gap: 4px;
  margin-top: 12px;
}

input[type='range'] {
  appearance: none;
  width: 110px;
  height: 14px;
  background: linear-gradient(90deg, #1f51e5 var(--fill), #aeb0b0 var(--fill)) center / 100% 2px no-repeat;
}

input[type='range']::-webkit-slider-thumb {
  appearance: none;
  width: 14px;
  height: 14px;
  border: 1px solid #999;
  border-radius: 50%;
  background: radial-gradient(circle, #8a8a8a 3px, #fff 4px);
}

.spin {
  display: flex;
  align-items: center;
  flex: 1;
  height: 22px;
  border: 1px solid #c0c2c2;
  border-bottom-color: #8f9191;
  border-radius: 3px;
  background: #fff;
}

.spin button {
  width: 23px;
  height: 22px;
}

.spin input {
  width: 28px;
  margin-right: 8px;
  text-align: right;
}

.spin span {
  flex: 1;
}

.rail {
  position: relative;
  display: flex;
  flex-direction: column;
  align-items: center;
  gap: 8px;
  width: 56px;
  flex: none;
}

.rail button {
  width: 32px;
  height: 32px;
  border-radius: 5px;
}

.rail .rail-min {
  margin-top: 17px;
  height: 16px;
}

.rail .on {
  background: #cfd1d1;
}

.meter {
  position: absolute;
  right: 3px;
  top: 594px;
  width: 7px;
  height: 60px;
  border-radius: 4px;
  background: linear-gradient(#8e9290 0 20px, #62d892 20px, #2bc765);
}

.status {
  display: flex;
  align-items: center;
  height: 24px;
  padding: 0 18px 0 13px;
  box-sizing: border-box;
  border-top: 1px solid #c9cbca;
}

.status > .sep {
  margin: 0 16px 0 10px;
}

.status .sep {
  height: 14px;
}

.status button {
  gap: 5px;
}

.status-right {
  display: flex;
  align-items: center;
  gap: 14px;
  margin-left: auto;
}

.pair {
  display: flex;
  gap: 22px;
}

.views {
  display: flex;
  gap: 8px;
  margin: 0 -6px;
}

.views button {
  width: 24px;
  height: 23px;
  border-radius: 4px;
}

.views .on {
  background: #d0d0cc;
}

.show {
  display: flex;
  gap: 9px;
  margin: 0 -3px 0 -4px;
}

.play {
  width: 20px;
  height: 19px;
  border-radius: 3px;
  background: #e3661a;
}

.zoom {
  display: flex;
  align-items: center;
  gap: 14px;
}

.zoom .percent {
  gap: 14px;
  margin: 0 4px 0 8px;
}

.zoom input[type='range'] {
  margin-right: -4px;
}

.zoom input[type='range']::-webkit-slider-thumb {
  width: 12px;
  height: 12px;
  border: 0;
  background: #fff;
}

.marks {
  position: absolute;
  left: 0;
  top: 0;
  pointer-events: none;
}

.arrows {
  fill: none;
  stroke-width: 3;
  filter: drop-shadow(3px 3px 2px #0008);
}

.arrows path {
  stroke: #e80a0a;
}

.arrows .head {
  fill: #ff0a0a;
  stroke: #7d2020;
  stroke-width: 1;
}

.badges {
  filter: drop-shadow(2px 2px 2px #0009);
}

.badges circle {
  fill: #0505f5;
  stroke: #fff;
  stroke-width: 3;
}

.badges text {
  fill: #fff;
  font: 700 12px 'DejaVu Sans', sans-serif;
  text-anchor: middle;
}

.watermark {
  position: absolute;
  right: 12px;
  bottom: 8px;
  display: flex;
  opacity: 0.8;
  pointer-events: none;
}

.watermark p {
  display: flex;
  flex-direction: column;
  margin: 0 0 0 -2px;
}

.watermark b {
  color: #3f86cc;
  font-size: 21px;
  line-height: 22px;
}

.watermark span {
  color: #3fb56d;
  font: 700 16px/20px 'Liberation Sans', sans-serif;
}
</style>
